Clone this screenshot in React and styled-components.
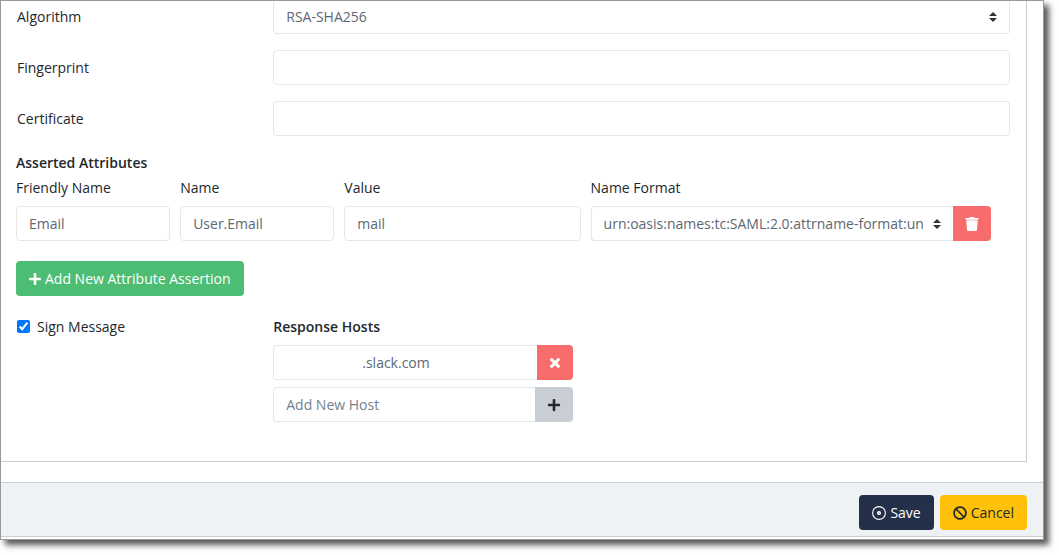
import React, { useState } from 'react'
import styled, { createGlobalStyle, css } from 'styled-components'
import { FaBan, FaPlus, FaTimes } from 'react-icons/fa'

const formats = [
    'urn:oasis:names:tc:SAML:2.0:attrname-format:unspecified',
    'urn:oasis:names:tc:SAML:2.0:attrname-format:uri',
    'urn:oasis:names:tc:SAML:2.0:attrname-format:basic'
]

const App = () => {

    const [algorithm, setAlgorithm] = useState('RSA-SHA256')
    const [fingerprint, setFingerprint] = useState('')
    const [certificate, setCertificate] = useState('')
    const [attributes, setAttributes] = useState([
        { id: 1, friendlyName: 'Email', name: 'User.Email', value: 'mail', format: formats[0] }
    ])
    const [signMessage, setSignMessage] = useState(true)
    const [hosts, setHosts] = useState(['.slack.com'])
    const [newHost, setNewHost] = useState('')

    const updateAttribute = (id, key, value) => {
        setAttributes(attributes.map(a => (a.id === id ? { ...a, [key]: value } : a)))
    }

    const addAttribute = () => {
        setAttributes([...attributes, { id: Date.now(), friendlyName: '', name: '', value: '', format: formats[0] }])
    }

    const removeAttribute = (id) => {
        setAttributes(attributes.filter(a => a.id !== id))
    }

    const updateHost = (index, value) => {
        setHosts(hosts.map((h, i) => (i === index ? value : h)))
    }

    const addHost = () => {
        if (newHost) {
            setHosts([...hosts, newHost])
            setNewHost('')
        }
    }

    return (
        <>
            <GlobalStyle />
            <Window>
                <Panel>
                    <FieldRow>
                        <FieldLabel htmlFor='algorithm'>Algorithm</FieldLabel>
                        <Select id='algorithm' value={algorithm} onChange={e => setAlgorithm(e.target.value)}>
                            <option>RSA-SHA256</option>
                            <option>RSA-SHA1</option>
                        </Select>
                    </FieldRow>
                    <FieldRow>
                        <FieldLabel htmlFor='fingerprint'>Fingerprint</FieldLabel>
                        <Input id='fingerprint' value={fingerprint} onChange={e => setFingerprint(e.target.value)} />
                    </FieldRow>
                    <FieldRow>
                        <FieldLabel htmlFor='certificate'>Certificate</FieldLabel>
                        <Input id='certificate' value={certificate} onChange={e => setCertificate(e.target.value)} />
                    </FieldRow>

                    <Title>Asserted Attributes</Title>
                    {
                        attributes.map(a => (
                            <AttributeRow key={a.id}>
                                <Column $span={2}>
                                    <Label htmlFor={`friendly-${a.id}`}>Friendly Name</Label>
                                    <Input id={`friendly-${a.id}`} value={a.friendlyName} onChange={e => updateAttribute(a.id, 'friendlyName', e.target.value)} />
                                </Column>
                                <Column $span={2}>
                                    <Label htmlFor={`name-${a.id}`}>Name</Label>
                                    <Input id={`name-${a.id}`} value={a.name} onChange={e => updateAttribute(a.id, 'name', e.target.value)} />
                                </Column>
                                <Column $span={3}>
                                    <Label htmlFor={`value-${a.id}`}>Value</Label>
                                    <Input id={`value-${a.id}`} value={a.value} onChange={e => updateAttribute(a.id, 'value', e.target.value)} />
                                </Column>
                                <Column $span={5}>
                                    <Label htmlFor={`format-${a.id}`}>Name Format</Label>
                                    <InputGroup>
                                        <Select id={`format-${a.id}`} value={a.format} onChange={e => updateAttribute(a.id, 'format', e.target.value)}>
                                            {formats.map(f => <option key={f}>{f}</option>)}
                                        </Select>
                                        <AddonButton $variant='danger' aria-label='Remove attribute' onClick={() => removeAttribute(a.id)}>
                                            <TrashIcon />
                                        </AddonButton>
                                    </InputGroup>
                                </Column>
                            </AttributeRow>
                        ))
                    }
                    <Button $variant='success' $iconWidth={12} onClick={addAttribute}>
                        <FaPlus />
                        Add New Attribute Assertion
                    </Button>

                    <HostRow>
                        <CheckLabel>
                            <Checkbox type='checkbox' checked={signMessage} onChange={e => setSignMessage(e.target.checked)} />
                            Sign Message
                        </CheckLabel>
                        <Hosts>
                            <HostTitle>Response Hosts</HostTitle>
                            {
                                hosts.map((host, i) => (
                                    <InputGroup key={i}>
                                        <HostInput aria-label='Response host' value={host} onChange={e => updateHost(i, e.target.value)} />
                                        <AddonButton $variant='danger' $narrow aria-label='Remove host' onClick={() => setHosts(hosts.filter((h, n) => n !== i))}>
                                            <FaTimes stroke='currentColor' strokeWidth='24' />
                                        </AddonButton>
                                    </InputGroup>
                                ))
                            }
                            <InputGroup>
                                <Input aria-label='New host' placeholder='Add New Host' value={newHost} onChange={e => setNewHost(e.target.value)} />
                                <AddonButton $variant='secondary' aria-label='Add host' onClick={addHost}>
                                    <FaPlus />
                                </AddonButton>
                            </InputGroup>
                        </Hosts>
                    </HostRow>
                </Panel>
                <Footer>
                    <Button $variant='primary'>
                        <TargetIcon />
                        Save
                    </Button>
                    <Button $variant='warning'>
                        <FaBan />
                        Cancel
                    </Button>
                </Footer>
            </Window>
        </>
    )
}

const TargetIcon = () => (
    <svg viewBox='0 0 14 14' fill='none' stroke='currentColor'>
        <circle cx='7' cy='7' r='6.4' strokeWidth='1.1' />
        <circle cx='7' cy='7' r='1.3' strokeWidth='1.5' />
    </svg>
)

const TrashIcon = () => (
    <svg viewBox='0 0 14 14' fill='currentColor'>
        <path d='M.8 1H4.300l.4-.7Q4.900 0 5.300 0h3.400q.4 0 .6.300l.4.700h3.500q.4 0 .4.400v.900q0 .4-.4.400H.8q-.4 0-.4-.4v-.9Q.4 1 .8 1z' />
        <path d='M1.300 3.300h11.400l-.7 9.500q-.1 1.200-1.300 1.200H3.300Q2.100 14 2 12.800z' />
    </svg>
)

const variants = {
    primary: { background: '#24304a', color: '#fff' },
    success: { background: '#4dbd74', color: '#fff' },
    danger: { background: '#f86c6b', color: '#fff' },
    warning: { background: '#ffc107', color: '#23282c' },
    secondary: { background: '#c8ced3', color: '#23282c' }
}

const GlobalStyle = createGlobalStyle`
*, *::before, *::after {
    box-sizing: border-box;
}
body {
    margin: 0;
    background: #fff;
    color: #23282c;
    font-family: 'Open Sans', sans-serif;
    font-size: 14px;
    line-height: 21px;
}
input, select, button {
    margin: 0;
    font: inherit;
}
`

const Window = styled.div`
margin: 0 15px 15px 0;
border: 1px solid #999;
background: #fff;
box-shadow: 5px 5px 6px rgba(0, 0, 0, 0.65);
overflow: hidden;
`

/* the form is scrolled, its first row runs under the top edge */
const Panel = styled.div`
margin: -2px 16px 20px 0;
padding: 0 15px 39px;
border-right: 1px solid #c8ced3;
border-bottom: 1px solid #c8ced3;
`

const FieldRow = styled.div`
display: grid;
grid-template-columns: repeat(4, 1fr);
column-gap: 32px;
align-items: center;
margin-bottom: 16px;
padding: 0 1px;
> :last-child {
    grid-column: span 3;
}
`

const FieldLabel = styled.label`
display: block;
`

const control = css`
display: block;
width: 100%;
min-width: 0;
height: 35px;
padding: 0 12px;
border: 1px solid #e4e7ea;
border-radius: 4px;
background-color: #fff;
color: #5c6873;
&:focus {
    outline: none;
    border-color: #8ad4ee;
}
`

const Input = styled.input`
${control}
&::placeholder {
    color: #73818f;
    opacity: 1;
}
`

const HostInput = styled(Input)`
padding-left: 88px;
`

const Select = styled.select`
${control}
appearance: none;
padding-right: 30px;
background-image: url("data:image/svg+xml,%3Csvg xmlns='http://www.w3.org/2000/svg' viewBox='0 0 4 5'%3E%3Cpath fill='%232f353a' d='M2 0L0 2h4zm0 5L0 3h4z'/%3E%3C/svg%3E");
background-repeat: no-repeat;
background-position: right 12px center;
background-size: 8px 10px;
`

const Title = styled.h2`
margin: 0 0 4px;
font-size: 14px;
font-weight: 600;
`

const HostTitle = styled(Title)`
margin-bottom: 8px;
`

const AttributeRow = styled.div`
display: grid;
grid-template-columns: repeat(12, 1fr);
column-gap: 10px;
margin: 0 20px 20px 0;
`

const Column = styled.div`
grid-column: span ${({ $span }) => $span};
min-width: 0;
`

const Label = styled.label`
display: block;
margin-bottom: 8px;
`

const Button = styled.button`
display: inline-flex;
align-items: center;
justify-content: center;
gap: 4px;
height: 35px;
padding: 0 13px;
border: 0;
border-radius: 4px;
background: ${({ $variant }) => variants[$variant].background};
color: ${({ $variant }) => variants[$variant].color};
cursor: pointer;
svg {
    flex: none;
    width: ${({ $iconWidth = 14 }) => $iconWidth}px;
    height: 14px;
}
`

const AddonButton = styled(Button)`
flex: none;
width: ${({ $narrow }) => ($narrow ? '36px' : '38px')};
padding: 0;
border-radius: 0 4px 4px 0;
`

const InputGroup = styled.div`
display: flex;
${Input}, ${Select} {
    flex: 1;
    border-right: 0;
    border-top-right-radius: 0;
    border-bottom-right-radius: 0;
}
& + & {
    margin-top: 7px;
}
`

const HostRow = styled(FieldRow)`
align-items: start;
margin: 20px 0 0;
`

const CheckLabel = styled.label`
display: flex;
align-items: center;
gap: 7px;
`

const Checkbox = styled.input`
width: 13px;
height: 13px;
accent-color: #0075ff;
`

const Hosts = styled.div`
max-width: 300px;
`

const Footer = styled.div`
display: flex;
justify-content: flex-end;
gap: 6px;
margin-bottom: 2px;
padding: 12px 16px 6px;
border-top: 1px solid #c8ced3;
border-bottom: 1px solid #c8ced3;
background: #eef2f5;
`

export default App
